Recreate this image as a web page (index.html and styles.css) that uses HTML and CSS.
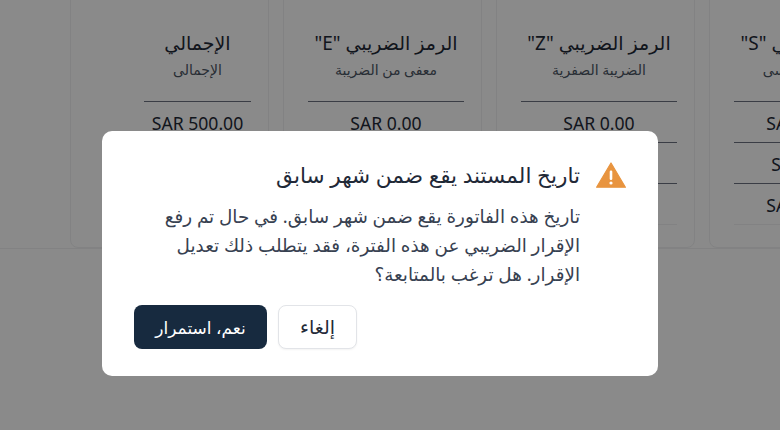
FILE: index.html
```html
<!DOCTYPE html>
<html lang="ar" dir="rtl">
<head><meta charset="utf-8"><title>تنبيه</title><link rel="stylesheet" href="styles.css"></head>
<body>
<main class="page">
  <section class="card">
    <h3>الرمز الضريبي "S"</h3><p class="sub">الضريبة الأساسى</p>
    <div class="cell">SAR 500.00</div><div class="cell">SAR 75.00</div><div class="cell">SAR 575.00</div>
  </section>
  <section class="card">
    <h3>الرمز الضريبي "Z"</h3><p class="sub">الضريبة الصفرية</p>
    <div class="cell">SAR 0.00</div><div class="cell">SAR 0.00</div><div class="cell">SAR 0.00</div>
  </section>
  <section class="card">
    <h3>الرمز الضريبي "E"</h3><p class="sub">معفى من الضريبة</p>
    <div class="cell">SAR 0.00</div><div class="cell">SAR 0.00</div><div class="cell">SAR 0.00</div>
  </section>
  <section class="card card-total">
    <h3>الإجمالي</h3><p class="sub">الإجمالى</p>
    <div class="cell">SAR 500.00</div><div class="cell">SAR 75.00</div><div class="cell">SAR 575.00</div>
  </section>
</main>
<div class="overlay">
  <div class="dialog" role="alertdialog">
    <div class="head">
      <svg class="warn" viewBox="0 0 30 26" aria-hidden="true"><path d="M15 1 29.4 25.2H0.6Z" fill="#e8943f" stroke="#e8943f" stroke-width="1.2" stroke-linejoin="round"/><rect x="13.7" y="8.5" width="2.6" height="9.5" rx="1.2" fill="#fff"/><circle cx="15" cy="21" r="1.6" fill="#fff"/></svg>
      <h2>تاريخ المستند يقع ضمن شهر سابق</h2>
    </div>
    <p class="msg">تاريخ هذه الفاتورة يقع ضمن شهر سابق. في حال تم رفع الإقرار الضريبي عن هذه الفترة، فقد يتطلب ذلك تعديل الإقرار. هل ترغب بالمتابعة؟</p>
    <div class="actions">
      <button class="btn cancel">إلغاء</button>
      <button class="btn ok">نعم، استمرار</button>
    </div>
  </div>
</div>
</body>
</html>
```
FILE: styles.css
```css
* { box-sizing: border-box; }
html, body { margin: 0; height: 100%; }
body { width: 780px; height: 430px; overflow: hidden; background: #fff; font-family: "Noto Sans", "DejaVu Sans", sans-serif; color: #1f2937; position: relative; }
.page { display: flex; gap: 14px; height: 249px; margin-right: -128px; border-bottom: 1px solid #f0f1f3; }
.card { flex: 0 0 199px; height: 268px; margin-top: -20px; border: 1px solid #f0f1f3; border-radius: 8px; padding: 44px 17px 0 24px; text-align: center; }
.card-total { padding-left: 73px; }
h3 { margin: 0; font-size: 19px; font-weight: 400; line-height: 36px; white-space: nowrap; }
.sub { margin: 0; height: 41px; font-size: 14px; line-height: 18px; color: #4b5563; white-space: nowrap; border-bottom: 1px solid #6b7280; }
.cell { font-size: 17.6px; height: 41px; line-height: 42px; border-bottom: 1px solid #6b7280; white-space: nowrap; }
.cell:last-child { border-bottom-color: #f0f1f3; }
.overlay { position: absolute; inset: 0; background: rgba(0,0,0,.46); display: flex; align-items: center; justify-content: center; padding-top: 77px; }
.dialog { width: 556px; height: 245px; margin-left: -20px; background: #fff; border-radius: 10px; padding: 26px 32px 27px; display: flex; flex-direction: column; }
.head { display: flex; align-items: center; gap: 16px; }
.warn { width: 30px; height: 26px; flex: none; }
h2 { margin: 0; font-size: 21.6px; font-weight: 400; line-height: 36px; color: #1f2937; }
.msg { margin: 8px 0 0; padding: 0 46px 0 8px; font-size: 18.35px; line-height: 29px; color: #374151; }
.actions { margin-top: auto; display: flex; gap: 11px; justify-content: flex-end; }
.btn { height: 44px; border-radius: 8px; font: inherit; font-size: 17px; }
.cancel { width: 79px; background: #fff; border: 1px solid #e2e4e8; color: #1f2937; font-size: 19px; box-shadow: 0 1px 2px rgba(0,0,0,.05); }
.ok { width: 133px; background: #172a3f; border: 0; color: #fff; }
```
